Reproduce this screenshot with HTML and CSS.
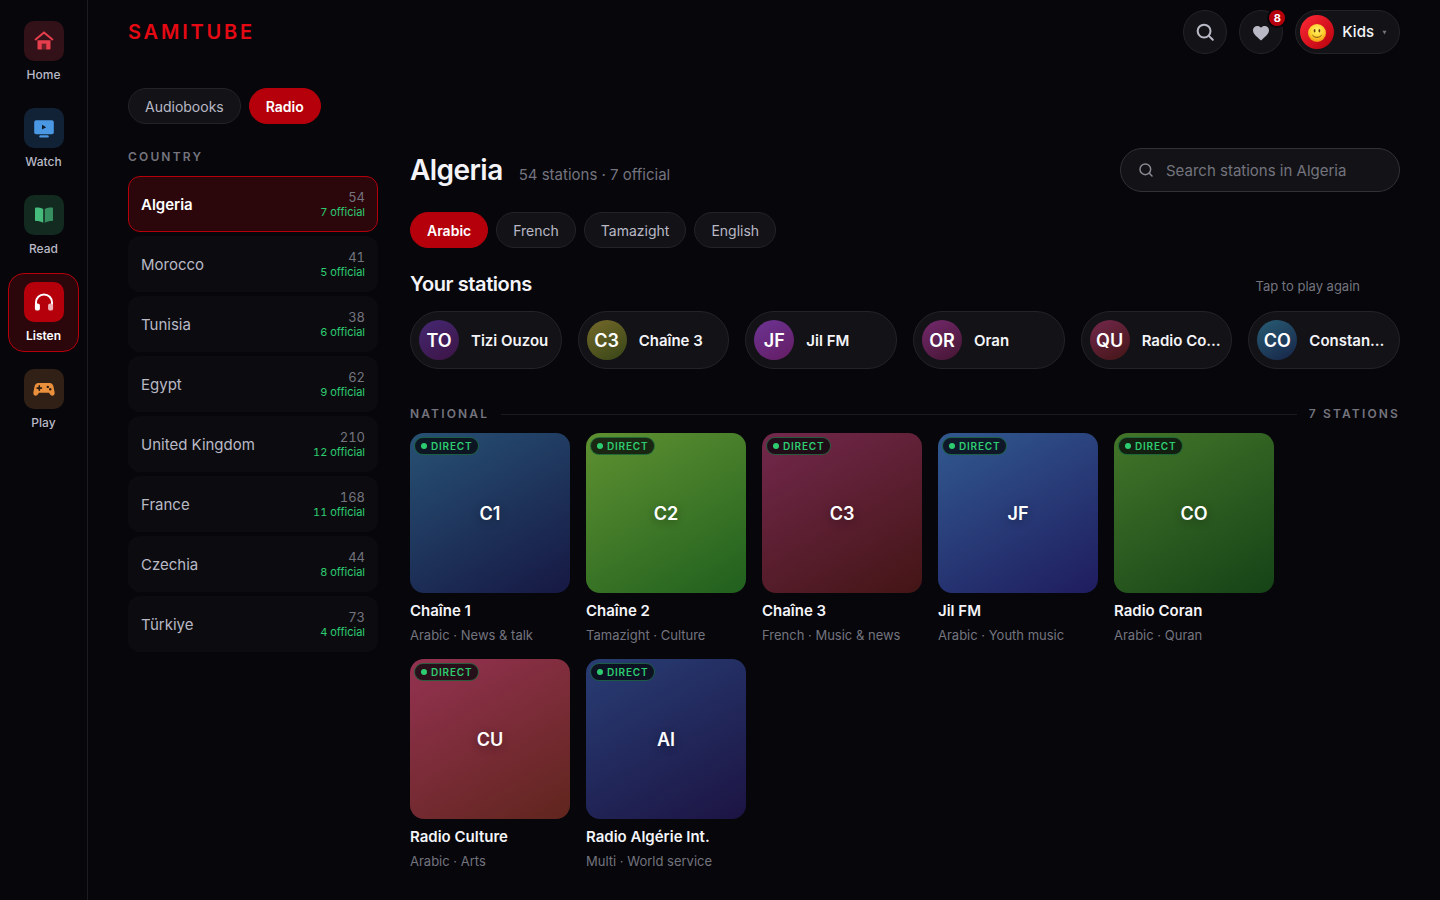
FILE: index.html
```html
<!DOCTYPE html>
<html lang="en">
<head>
    <meta charset="UTF-8">
    <meta name="viewport" content="width=device-width, initial-scale=1.0">
    <title>Samitube - Radio</title>
    <link rel="stylesheet" href="styles.css">
</head>
<body>
    <nav class="sidebar" aria-label="Main">
        <a class="nav-item" href="#">
            <span class="nav-icon home">
                <svg width="24" height="24" viewBox="0 0 24 24" fill="none">
                    <path d="M3.6 10.400 12 3.400l8.400 7" stroke="currentColor" stroke-width="2" stroke-linecap="round" stroke-linejoin="round"/>
                    <path d="M5.500 11.200h13v8.600a.8.8 0 0 1-.8.8h-3.500v-5.800H9.800v5.800H6.300a.8.8 0 0 1-.8-.8z" fill="currentColor"/>
                    <path d="M9.800 14.800h4.400v5.800H9.800z" fill="currentColor" opacity=".3"/>
                </svg>
            </span>
            <span class="nav-label">Home</span>
        </a>
        <a class="nav-item" href="#">
            <span class="nav-icon watch">
                <svg width="24" height="24" viewBox="0 0 24 24">
                    <rect x="2.200" y="4.200" width="19.600" height="14" rx="2" fill="currentColor"/>
                    <rect x="7.300" y="19.200" width="9.400" height="2.400" rx="1.200" fill="currentColor"/>
                    <path d="M10 8.800v4.800l4.200-2.400z" fill="#0d1a2a"/>
                </svg>
            </span>
            <span class="nav-label">Watch</span>
        </a>
        <a class="nav-item" href="#">
            <span class="nav-icon read">
                <svg width="24" height="24" viewBox="0 0 24 24" fill="currentColor">
                    <path d="M3 5.600c0-.7.500-1.200 1.200-1.200 2.600 0 5 .4 7 1.600v13.800c-2-1.100-4.400-1.700-7-1.700-.7 0-1.200-.4-1.200-1z"/>
                    <path opacity=".7" d="M21 5.600c0-.7-.5-1.200-1.200-1.200-2.600 0-5 .4-7 1.600v13.800c2-1.100 4.400-1.700 7-1.700.7 0 1.200-.4 1.200-1z"/>
                </svg>
            </span>
            <span class="nav-label">Read</span>
        </a>
        <a class="nav-item active" href="#" aria-current="page">
            <span class="nav-icon listen">
                <svg width="24" height="24" viewBox="0 0 24 24" fill="none">
                    <path d="M4 16v-3.600a8 8 0 0 1 16 0V16" stroke="currentColor" stroke-width="2"/>
                    <rect x="2.900" y="13.400" width="5" height="7.200" rx="2.200" fill="currentColor"/>
                    <rect x="16.100" y="13.400" width="5" height="7.200" rx="2.200" fill="#eeb3b8"/>
                </svg>
            </span>
            <span class="nav-label">Listen</span>
        </a>
        <a class="nav-item" href="#">
            <span class="nav-icon play">
                <svg width="24" height="24" viewBox="0 0 24 24">
                    <path d="M6.400 6h11.200c2.100 0 3.400 1.300 3.800 3.300l1.200 6c.4 2.100-.8 3.400-2.300 3.400-1 0-1.700-.5-2.300-1.400l-1-1.500H7l-1 1.500c-.6.900-1.300 1.400-2.300 1.400-1.500 0-2.700-1.300-2.300-3.400l1.200-6C3 7.300 4.300 6 6.400 6z" fill="currentColor"/>
                    <path d="M7.300 8.900v4.400M5.100 11.100h4.400" stroke="#2e1d12" stroke-width="1.600" stroke-linecap="round"/>
                    <circle cx="15.800" cy="9.900" r="1.200" fill="#2e1d12"/>
                    <circle cx="18.200" cy="12.200" r="1.200" fill="#2e1d12"/>
                </svg>
            </span>
            <span class="nav-label">Play</span>
        </a>
    </nav>

    <div class="page">
        <header class="topbar">
            <a class="brand" href="#">SAMITUBE</a>
            <div class="topbar-actions">
                <button class="round-btn" type="button" aria-label="Search">
                    <svg width="22" height="22" viewBox="0 0 24 24" fill="none" stroke="currentColor" stroke-width="2.200" stroke-linecap="round">
                        <circle cx="11" cy="11" r="7"/>
                        <path d="m16.200 16.200 4.300 4.300"/>
                    </svg>
                </button>
                <button class="round-btn" type="button" aria-label="Favourites">
                    <svg width="20" height="20" viewBox="0 0 24 24" fill="currentColor">
                        <path d="M12 22.300 10.600 21C5.400 16.400 2.400 13.500 2.400 9.900 2.400 7 4.700 4.800 7.600 4.800c1.700 0 3.300.8 4.400 2.100 1.100-1.300 2.700-2.100 4.400-2.100 2.900 0 5.200 2.200 5.200 5.100 0 3.600-3 6.500-8.200 11.100z"/>
                    </svg>
                    <span class="count">8</span>
                </button>
                <button class="profile" type="button">
                    <span class="profile-face">
                        <svg width="20" height="20" viewBox="0 0 20 20">
                            <defs>
                                <radialGradient id="face" cx=".5" cy=".35" r=".65">
                                    <stop offset="0" stop-color="#fff36b"/>
                                    <stop offset=".6" stop-color="#ffd02e"/>
                                    <stop offset="1" stop-color="#ee9412"/>
                                </radialGradient>
                            </defs>
                            <circle cx="10" cy="11" r="9" fill="url(#face)"/>
                            <ellipse cx="7.600" cy="8.800" rx=".9" ry="1.700" fill="#6b3d0a"/>
                            <ellipse cx="12.400" cy="8.800" rx=".9" ry="1.700" fill="#6b3d0a"/>
                            <path d="M5.600 13.400c2.200 2.700 6.600 2.700 8.800 0" fill="none" stroke="#7c480c" stroke-linecap="round"/>
                        </svg>
                    </span>
                    Kids
                    <svg class="caret" width="5" height="5" viewBox="0 0 5 5" fill="currentColor"><path d="M.5.800h4L2.500 4.500z"/></svg>
                </button>
            </div>
        </header>

        <div class="tabs">
            <button class="chip" type="button">Audiobooks</button>
            <button class="chip selected" type="button">Radio</button>
        </div>

        <div class="layout">
            <aside class="countries">
                <h2 class="eyebrow">COUNTRY</h2>
                <ul class="country-list">
                    <li><button class="country current" type="button">Algeria <span class="totals">54 <em>7 official</em></span></button></li>
                    <li><button class="country" type="button">Morocco <span class="totals">41 <em>5 official</em></span></button></li>
                    <li><button class="country" type="button">Tunisia <span class="totals">38 <em>6 official</em></span></button></li>
                    <li><button class="country" type="button">Egypt <span class="totals">62 <em>9 official</em></span></button></li>
                    <li><button class="country" type="button">United Kingdom <span class="totals">210 <em>12 official</em></span></button></li>
                    <li><button class="country" type="button">France <span class="totals">168 <em>11 official</em></span></button></li>
                    <li><button class="country" type="button">Czechia <span class="totals">44 <em>8 official</em></span></button></li>
                    <li><button class="country" type="button">Türkiye <span class="totals">73 <em>4 official</em></span></button></li>
                </ul>
            </aside>

            <main class="stations">
                <div class="stations-head">
                    <div class="title">
                        <h1>Algeria</h1>
                        <p>54 stations · 7 official</p>
                    </div>
                    <label class="search">
                        <svg width="16" height="16" viewBox="0 0 24 24" fill="none" stroke="currentColor" stroke-width="2.200" stroke-linecap="round">
                            <circle cx="11" cy="11" r="8"/>
                            <path d="m17 17 4 4"/>
                        </svg>
                        <input type="search" placeholder="Search stations in Algeria" aria-label="Search stations in Algeria">
                    </label>
                </div>

                <div class="languages">
                    <button class="chip selected" type="button">Arabic</button>
                    <button class="chip" type="button">French</button>
                    <button class="chip" type="button">Tamazight</button>
                    <button class="chip" type="button">English</button>
                </div>

                <section>
                    <div class="recent-head">
                        <h2>Your stations</h2>
                        <p>Tap to play again</p>
                    </div>
                    <div class="recent-list">
                        <button class="recent" type="button"><span class="avatar violet">TO</span><span class="recent-name">Tizi Ouzou</span></button>
                        <button class="recent" type="button"><span class="avatar olive">C3</span><span class="recent-name">Chaîne 3</span></button>
                        <button class="recent" type="button"><span class="avatar purple">JF</span><span class="recent-name">Jil FM</span></button>
                        <button class="recent" type="button"><span class="avatar plum">OR</span><span class="recent-name">Oran</span></button>
                        <button class="recent" type="button"><span class="avatar wine">QU</span><span class="recent-name">Radio Co…</span></button>
                        <button class="recent" type="button"><span class="avatar teal">CO</span><span class="recent-name">Constan…</span></button>
                    </div>
                </section>

                <section>
                    <div class="group-head">
                        <h2 class="eyebrow">NATIONAL</h2>
                        <span class="rule"></span>
                        <span class="eyebrow">7 STATIONS</span>
                    </div>
                    <div class="station-grid">
                        <a class="station" href="#">
                            <span class="cover ocean">C1<span class="live">DIRECT</span></span>
                            <span class="station-name">Chaîne 1</span>
                            <span class="station-info">Arabic · News &amp; talk</span>
                        </a>
                        <a class="station" href="#">
                            <span class="cover lime">C2<span class="live">DIRECT</span></span>
                            <span class="station-name">Chaîne 2</span>
                            <span class="station-info">Tamazight · Culture</span>
                        </a>
                        <a class="station" href="#">
                            <span class="cover wine">C3<span class="live">DIRECT</span></span>
                            <span class="station-name">Chaîne 3</span>
                            <span class="station-info">French · Music &amp; news</span>
                        </a>
                        <a class="station" href="#">
                            <span class="cover blue">JF<span class="live">DIRECT</span></span>
                            <span class="station-name">Jil FM</span>
                            <span class="station-info">Arabic · Youth music</span>
                        </a>
                        <a class="station" href="#">
                            <span class="cover forest">CO<span class="live">DIRECT</span></span>
                            <span class="station-name">Radio Coran</span>
                            <span class="station-info">Arabic · Quran</span>
                        </a>
                        <a class="station" href="#">
                            <span class="cover rose">CU<span class="live">DIRECT</span></span>
                            <span class="station-name">Radio Culture</span>
                            <span class="station-info">Arabic · Arts</span>
                        </a>
                        <a class="station" href="#">
                            <span class="cover indigo">AI<span class="live">DIRECT</span></span>
                            <span class="station-name">Radio Algérie Int.</span>
                            <span class="station-info">Multi · World service</span>
                        </a>
                    </div>
                </section>
            </main>
        </div>
    </div>
</body>
</html>
```
FILE: styles.css
```css
:root {
    --bg: #06060b;
    --surface: #131317;
    --line: #232328;
    --text: #f4f4f8;
    --soft: #b9b9c6;
    --muted: #74747e;
    --red: #b5000c;
    --red-dark: #2b060b;
    --green: #2ecc71;
}

* {
    box-sizing: border-box;
}

body {
    margin: 0;
    min-height: 100vh;
    display: flex;
    background: var(--bg);
    color: var(--text);
    font-family: Inter, "Liberation Sans", sans-serif;
    font-size: 15px;
    line-height: 20px;
}

h1, h2, p, ul {
    margin: 0;
    padding: 0;
}

a {
    color: inherit;
    text-decoration: none;
}

button, input {
    font: inherit;
    color: inherit;
}

button {
    margin: 0;
    cursor: pointer;
}

svg {
    display: block;
    flex-shrink: 0;
}

/* Sidebar */
.sidebar {
    flex: 0 0 88px;
    display: flex;
    flex-direction: column;
    gap: 8px;
    padding: 12px 8px;
    border-right: 1px solid #1b1b20;
}

.nav-item {
    display: flex;
    flex-direction: column;
    align-items: center;
    gap: 6px;
    padding: 8px 0;
    border: 1px solid transparent;
    border-radius: 16px;
    color: var(--soft);
}

.nav-item.active {
    background: var(--red-dark);
    border-color: var(--red);
    color: #fff;
}

.nav-icon {
    display: grid;
    place-items: center;
    width: 40px;
    height: 40px;
    border-radius: 10px;
}

.home { background: #321118; color: #e63e4c; }
.watch { background: #122236; color: #4a98e4; }
.read { background: #132a21; color: #45bb7c; }
.listen { background: var(--red); color: #fff; }
.play { background: #302016; color: #ea8f3c; }

.nav-label {
    font-size: 12px;
    line-height: 15px;
    font-weight: 500;
}

.active .nav-label {
    font-weight: 600;
}

/* Page */
.page {
    flex: 1;
    min-width: 0;
    padding: 0 40px 24px;
}

.topbar {
    display: flex;
    justify-content: space-between;
    align-items: center;
    height: 64px;
}

.brand {
    color: #e50914;
    font-size: 20px;
    font-weight: 600;
    letter-spacing: 0.14em;
}

.topbar-actions {
    display: flex;
    gap: 12px;
}

.round-btn,
.profile {
    display: flex;
    align-items: center;
    height: 44px;
    border: 1px solid var(--line);
    border-radius: 22px;
    background: var(--surface);
}

.round-btn {
    position: relative;
    justify-content: center;
    width: 44px;
    padding: 0;
    color: var(--soft);
}

.count {
    position: absolute;
    top: -3px;
    right: -5px;
    min-width: 20px;
    height: 20px;
    border: 2px solid var(--bg);
    border-radius: 10px;
    background: var(--red);
    color: #fff;
    font-size: 11px;
    line-height: 16px;
    font-weight: 700;
    text-align: center;
}

.profile {
    gap: 8px;
    padding: 0 12px 0 4px;
    font-weight: 500;
}

.profile-face {
    display: grid;
    place-items: center;
    width: 34px;
    height: 34px;
    border-radius: 50%;
    background: linear-gradient(135deg, #ff2a36, #b5000c);
}

.caret {
    color: var(--muted);
}

.tabs,
.languages {
    display: flex;
    flex-wrap: wrap;
    gap: 8px;
}

.tabs {
    margin: 24px 0;
}

.chip {
    height: 36px;
    padding: 2px 16px 0;
    border: 1px solid var(--line);
    border-radius: 18px;
    background: var(--surface);
    color: var(--soft);
    font-size: 14px;
}

.chip.selected {
    background: var(--red);
    border-color: var(--red);
    color: #fff;
    font-weight: 600;
}

.layout {
    display: grid;
    grid-template-columns: 250px minmax(0, 1fr);
    gap: 32px;
}

.eyebrow {
    color: var(--muted);
    font-size: 12px;
    line-height: 18px;
    font-weight: 600;
    letter-spacing: 0.18em;
}

/* Countries */
.country-list {
    display: grid;
    gap: 4px;
    margin-top: 10px;
    list-style: none;
}

.country {
    display: flex;
    align-items: center;
    justify-content: space-between;
    width: 100%;
    height: 56px;
    padding: 2px 12px 0;
    border: 1px solid transparent;
    border-radius: 12px;
    background: #0c0c10;
    color: var(--soft);
}

.country.current {
    background: var(--red-dark);
    border-color: var(--red);
    color: #fff;
    font-weight: 600;
}

.totals {
    color: var(--muted);
    font-size: 13px;
    line-height: 15px;
    font-weight: 400;
    font-variant-numeric: tabular-nums;
    text-align: right;
}

.totals em {
    display: block;
    color: var(--green);
    font-size: 11px;
    font-style: normal;
}

/* Stations */
.stations-head {
    display: flex;
    justify-content: space-between;
    align-items: center;
    gap: 16px;
}

.title {
    display: flex;
    align-items: baseline;
    gap: 16px;
}

.title h1 {
    font-size: 28px;
    line-height: 36px;
    font-weight: 600;
    letter-spacing: -0.02em;
}

.title p {
    color: var(--muted);
}

.search {
    display: flex;
    align-items: center;
    gap: 12px;
    width: 280px;
    height: 44px;
    padding: 0 17px;
    border: 1px solid #313137;
    border-radius: 22px;
    background: var(--surface);
    color: #8a8a94;
}

.search input {
    flex: 1;
    min-width: 0;
    padding: 2px 0 0;
    border: 0;
    outline: 0;
    background: none;
    color: var(--text);
}

.search input::placeholder {
    color: var(--muted);
    opacity: 1;
}

.languages {
    margin: 20px 0 24px;
}

.recent-head {
    display: flex;
    justify-content: space-between;
    align-items: baseline;
    padding-right: 40px;
}

.recent-head h2 {
    font-size: 20px;
    line-height: 24px;
    font-weight: 600;
    letter-spacing: -0.02em;
}

.recent-head p {
    color: var(--muted);
    font-size: 13px;
}

.recent-list {
    display: grid;
    grid-template-columns: repeat(6, minmax(0, 1fr));
    gap: 16px;
    margin: 15px 0 36px;
}

.recent {
    display: flex;
    align-items: center;
    gap: 12px;
    height: 58px;
    padding: 0 8px;
    border: 1px solid var(--line);
    border-radius: 29px;
    background: var(--surface);
    font-weight: 600;
}

.avatar {
    flex: 0 0 40px;
    height: 40px;
    border-radius: 50%;
    color: #fff;
    font-size: 18px;
    line-height: 42px;
    font-weight: 600;
    text-align: center;
}

.recent-name {
    padding-top: 2px;
    overflow: hidden;
    text-overflow: ellipsis;
    white-space: nowrap;
}

.group-head {
    display: flex;
    align-items: center;
    gap: 12px;
    margin-bottom: 10px;
}

.rule {
    flex: 1;
    height: 1px;
    background: #1a1a1f;
}

.station-grid {
    display: grid;
    grid-template-columns: repeat(auto-fill, 160px);
    gap: 16px;
}

.station {
    display: flex;
    flex-direction: column;
}

.cover {
    position: relative;
    display: grid;
    place-items: center;
    aspect-ratio: 1;
    padding-top: 2px;
    margin-bottom: 8px;
    border-radius: 14px;
    color: #fff;
    font-size: 18px;
    font-weight: 600;
    text-shadow: 0 2px 8px rgba(0, 0, 0, 0.4);
}

.live {
    position: absolute;
    top: 4px;
    left: 4px;
    display: flex;
    align-items: center;
    gap: 4px;
    height: 18px;
    padding: 0 6px;
    border: 1px solid rgba(46, 204, 113, 0.4);
    border-radius: 9px;
    background: rgba(6, 6, 10, 0.75);
    color: var(--green);
    font-size: 10px;
    line-height: 16px;
    letter-spacing: 0.08em;
    text-shadow: none;
}

.live::before {
    content: "";
    width: 6px;
    height: 6px;
    border-radius: 50%;
    background: var(--green);
}

.station-name {
    margin-bottom: 6px;
    font-weight: 600;
}

.station-info {
    color: var(--muted);
    font-size: 13px;
    line-height: 16px;
}

/* Artwork colours */
.violet { background: linear-gradient(150deg, #452873, #3c1444); }
.olive { background: linear-gradient(150deg, #75692a, #364517); }
.purple { background: linear-gradient(150deg, #6b3494, #651c62); }
.plum { background: linear-gradient(150deg, #74296d, #441531); }
.wine { background: linear-gradient(150deg, #73284c, #431515); }
.teal { background: linear-gradient(150deg, #285d74, #172448); }
.ocean { background: linear-gradient(150deg, #275174, #161843); }
.lime { background: linear-gradient(150deg, #5f9131, #20601e); }
.blue { background: linear-gradient(150deg, #31598f, #1f1c5f); }
.forest { background: linear-gradient(150deg, #437529, #154317); }
.rose { background: linear-gradient(150deg, #943251, #60251d); }
.indigo { background: linear-gradient(150deg, #283d74, #1c1443); }
```
